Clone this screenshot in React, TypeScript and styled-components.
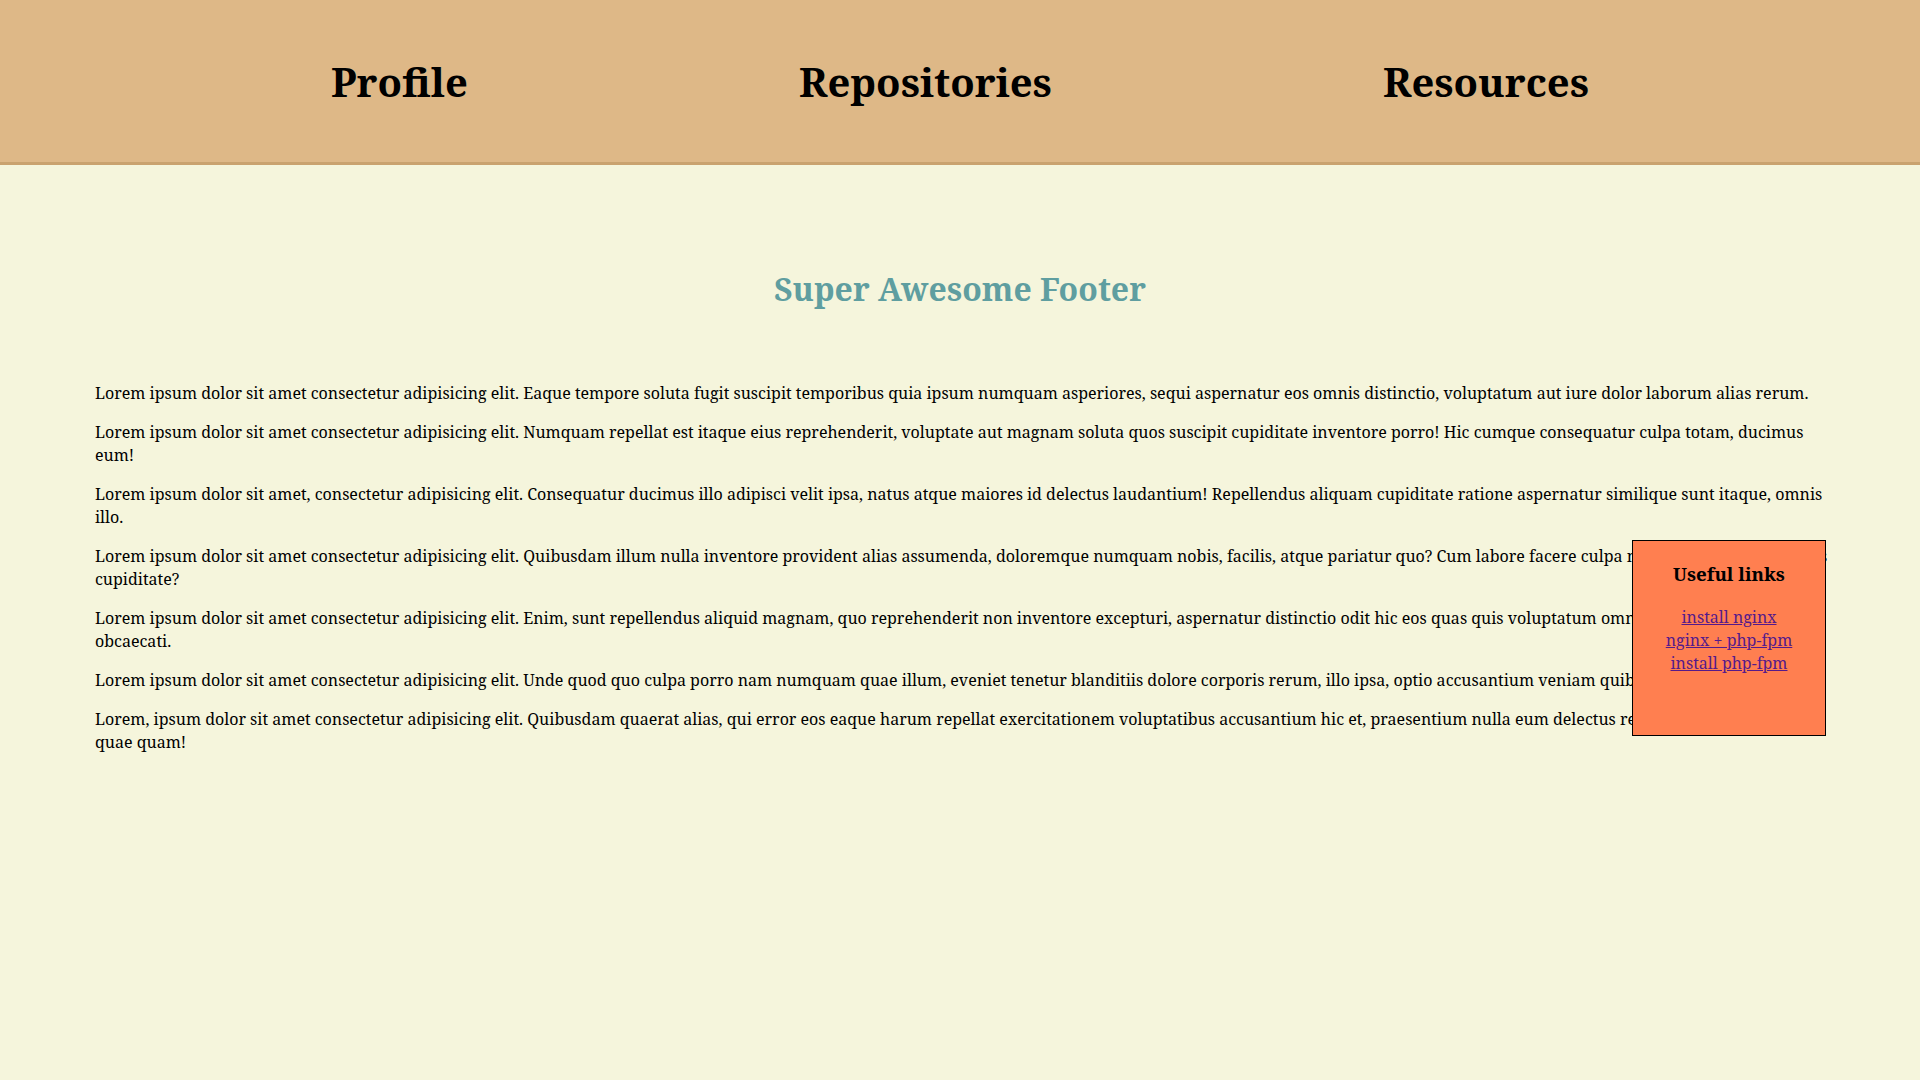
import React from "react";
import styled, { createGlobalStyle } from "styled-components";

const Global = createGlobalStyle`
  html, body {
    margin: 0;
    padding: 0;
    background: #f5f5dc;
    font-family: "Noto Serif", "DejaVu Serif", serif;
    color: #000;
  }
`;

const Header = styled.header`
  height: 162px;
  background: #deb887;
  border-bottom: 3px solid #c9a26f;
  display: flex;
  justify-content: space-evenly;
  align-items: center;
`;

const NavItem = styled.h1`
  margin: 0;
  font-size: 40px;
  font-weight: 700;
  color: #000;
`;

const Main = styled.main`
  padding: 0 89px 0 95px;
`;

const Title = styled.h1`
  margin: 102px 0 72px;
  text-align: center;
  font-size: 32px;
  font-weight: 700;
  color: #5f9ea0;
  padding-right: 6px;
`;

const Para = styled.p`
  margin: 16px 0;
  font-size: 16px;
  line-height: 23px;
`;

const LinksBox = styled.aside`
  position: fixed;
  top: 540px;
  right: 94px;
  width: 194px;
  height: 196px;
  box-sizing: border-box;
  background: #ff7f50;
  border: 1px solid #000;
  text-align: center;
  padding: 1px 0;
`;

const LinksTitle = styled.h3`
  margin: 18.72px 0 20px;
  font-size: 18.72px;
  font-weight: 700;
`;

const LinkList = styled.div`
  display: flex;
  flex-direction: column;
  align-items: center;
  line-height: 23px;
`;

const Link = styled.a`
  color: #551a8b;
  text-decoration: underline;
  font-size: 16px;
`;

const paragraphs = [
  "Lorem ipsum dolor sit amet consectetur adipisicing elit. Eaque tempore soluta fugit suscipit temporibus quia ipsum numquam asperiores, sequi aspernatur eos omnis distinctio, voluptatum aut iure dolor laborum alias rerum.",
  "Lorem ipsum dolor sit amet consectetur adipisicing elit. Numquam repellat est itaque eius reprehenderit, voluptate aut magnam soluta quos suscipit cupiditate inventore porro! Hic cumque consequatur culpa totam, ducimus eum!",
  "Lorem ipsum dolor sit amet, consectetur adipisicing elit. Consequatur ducimus illo adipisci velit ipsa, natus atque maiores id delectus laudantium! Repellendus aliquam cupiditate ratione aspernatur similique sunt itaque, omnis illo.",
  "Lorem ipsum dolor sit amet consectetur adipisicing elit. Quibusdam illum nulla inventore provident alias assumenda, doloremque numquam nobis, facilis, atque pariatur quo? Cum labore facere culpa nisi laudantium reiciendis cupiditate?",
  "Lorem ipsum dolor sit amet consectetur adipisicing elit. Enim, sunt repellendus aliquid magnam, quo reprehenderit non inventore excepturi, aspernatur distinctio odit hic eos quas quis voluptatum omnis reprehenderit nemo obcaecati.",
  "Lorem ipsum dolor sit amet consectetur adipisicing elit. Unde quod quo culpa porro nam numquam quae illum, eveniet tenetur blanditiis dolore corporis rerum, illo ipsa, optio accusantium veniam quibusdam.",
  "Lorem, ipsum dolor sit amet consectetur adipisicing elit. Quibusdam quaerat alias, qui error eos eaque harum repellat exercitationem voluptatibus accusantium hic et, praesentium nulla eum delectus recusandae ea mollitia quae quam!",
];

export default function App() {
  return (
    <>
      <Global />
      <Header>
        <NavItem>Profile</NavItem>
        <NavItem>Repositories</NavItem>
        <NavItem>Resources</NavItem>
      </Header>
      <Main>
        <Title>Super Awesome Footer</Title>
        {paragraphs.map((p, i) => (
          <Para key={i}>{p}</Para>
        ))}
      </Main>
      <LinksBox>
        <LinksTitle>Useful links</LinksTitle>
        <LinkList>
          <Link href="#">install nginx</Link>
          <Link href="#">nginx + php-fpm</Link>
          <Link href="#">install php-fpm</Link>
        </LinkList>
      </LinksBox>
    </>
  );
}
